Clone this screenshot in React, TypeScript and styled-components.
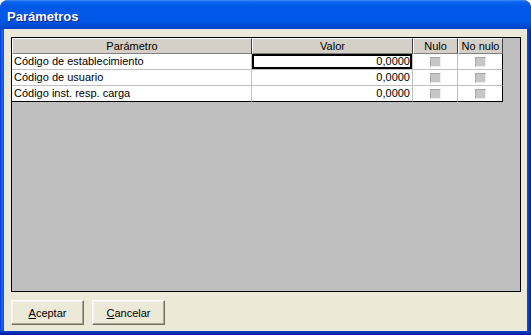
import React from 'react';
import styled, { createGlobalStyle } from 'styled-components';

const GlobalStyle = createGlobalStyle`
  html, body {
    margin: 0;
    padding: 0;
    background: #ffffff;
  }
  * {
    box-sizing: border-box;
  }
`;

const Window = styled.div`
  background: linear-gradient(to right, #0831d9 0, #166aee 2px, #0a4fe0 4px, #0a4fe0 calc(100% - 4px), #0639c8 calc(100% - 2px), #001ea0 100%);
  border-radius: 8px 8px 0 0;
  display: flex;
  flex-direction: column;
  font-family: 'Liberation Sans', Arial, sans-serif;
  height: 335px;
  overflow: hidden;
  width: 531px;
`;

const TitleBar = styled.div`
  align-items: center;
  background: linear-gradient(
    to bottom,
    #3b8cf5 0,
    #0b63ee 2px,
    #0058e8 6px,
    #005aea 14px,
    #0055e3 22px,
    #0049d4 26px,
    #003fc4 29px
  );
  color: #ffffff;
  display: flex;
  flex: 0 0 29px;
  font-size: 13px;
  font-weight: bold;
  padding: 3px 0 0 7px;
  text-shadow: 1px 1px 0 #0a1e8c;
`;

const Frame = styled.div`
  display: flex;
  flex: 1;
  padding: 0 4px 4px;
  background: linear-gradient(to bottom, transparent calc(100% - 4px), #0a3fc8 calc(100% - 4px), #001c9c 100%);
`;

const Client = styled.div`
  background: #ece9d8;
  display: flex;
  flex: 1;
  flex-direction: column;
  gap: 8px;
  padding: 8px 6px 6px 7px;
`;

const GridBox = styled.div`
  background: #bfbfbf;
  border: 1px solid #000000;
  display: flex;
  flex: 1;
  flex-direction: column;
  font-size: 11px;
  color: #000000;
`;

const Row = styled.div`
  display: flex;
  height: 16px;
  width: 491px;
`;

const HeaderCell = styled.div<{ $w: number }>`
  background: #d4d0c8;
  border-bottom: 1px solid #808080;
  border-right: 1px solid #404040;
  border-top: 1px solid #ffffff;
  border-left: 1px solid #ffffff;
  line-height: 14px;
  text-align: center;
  width: ${(p) => p.$w}px;
  white-space: nowrap;
`;

const Cell = styled.div<{ $w: number; $align?: string; $selected?: boolean; $last?: boolean }>`
  background: #ffffff;
  border-bottom: 1px solid ${(p) => (p.$last ? '#000000' : '#c0c0c0')};
  border-right: 1px solid #c0c0c0;
  line-height: 15px;
  overflow: hidden;
  padding: 0 2px;
  position: relative;
  text-align: ${(p) => p.$align || 'left'};
  width: ${(p) => p.$w}px;
  white-space: nowrap;
  box-shadow: ${(p) => (p.$selected ? 'inset 0 0 0 2px #000000' : 'none')};
`;

const EndCell = styled(Cell)`
  border-right: 1px solid #000000;
  display: flex;
  align-items: center;
  justify-content: center;
`;

const CheckCell = styled(Cell)`
  display: flex;
  align-items: center;
  justify-content: center;
`;

const Check = styled.span`
  background: #c6c6c6;
  border-bottom: 1px solid #f0f0f0;
  border-left: 1px solid #a8a8a8;
  border-right: 1px solid #f0f0f0;
  border-top: 1px solid #a8a8a8;
  display: block;
  height: 10px;
  width: 11px;
`;

const ButtonBar = styled.div`
  display: flex;
  gap: 8px;
`;

const Button = styled.button`
  background: #ece9d8;
  border-bottom: 1px solid #716f64;
  border-left: 1px solid #ffffff;
  border-right: 1px solid #716f64;
  border-top: 1px solid #ffffff;
  box-shadow: inset -1px -1px 0 #aca899, inset 1px 1px 0 #f5f4ea;
  color: #000000;
  font-family: 'Liberation Sans', Arial, sans-serif;
  font-size: 11px;
  height: 25px;
  padding: 0;
  width: 73px;

  u {
    text-decoration: underline;
  }
`;

const rows = [
  { name: 'Código de establecimiento', value: '0,0000' },
  { name: 'Código de usuario', value: '0,0000' },
  { name: 'Código inst. resp. carga', value: '0,0000' },
];

export default function App() {
  return (
    <>
      <GlobalStyle />
      <Window>
        <TitleBar>Parámetros</TitleBar>
        <Frame>
          <Client>
            <GridBox>
              <Row>
                <HeaderCell $w={240}>Parámetro</HeaderCell>
                <HeaderCell $w={161}>Valor</HeaderCell>
                <HeaderCell $w={45}>Nulo</HeaderCell>
                <HeaderCell $w={45}>No nulo</HeaderCell>
              </Row>
              {rows.map((r, i) => {
                const last = i === rows.length - 1;
                return (
                  <Row key={r.name}>
                    <Cell $w={240} $last={last}>
                      {r.name}
                    </Cell>
                    <Cell $w={161} $align="right" $selected={i === 0} $last={last}>
                      {r.value}
                    </Cell>
                    <CheckCell $w={45} $last={last}>
                      <Check />
                    </CheckCell>
                    <EndCell $w={45} $last={last}>
                      <Check />
                    </EndCell>
                  </Row>
                );
              })}
            </GridBox>
            <ButtonBar>
              <Button>
                <u>A</u>ceptar
              </Button>
              <Button>
                <u>C</u>ancelar
              </Button>
            </ButtonBar>
          </Client>
        </Frame>
      </Window>
    </>
  );
}
